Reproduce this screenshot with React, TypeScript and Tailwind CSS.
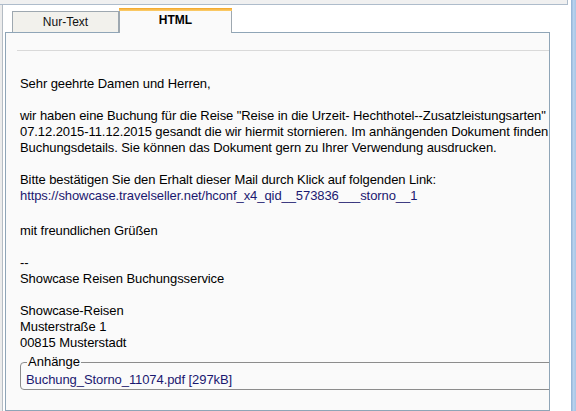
import React from "react";

const lines: { t: string; cls?: string }[] = [
  { t: "Sehr geehrte Damen und Herren," },
  { t: "\u00a0" },
  { t: 'wir haben eine Buchung für die Reise "Reise in die Urzeit- Hechthotel--Zusatzleistungsarten"' },
  { t: "07.12.2015-11.12.2015 gesandt die wir hiermit stornieren. Im anhängenden Dokument finden" },
  { t: "Buchungsdetails. Sie können das Dokument gern zu Ihrer Verwendung ausdrucken." },
  { t: "\u00a0" },
  { t: "Bitte bestätigen Sie den Erhalt dieser Mail durch Klick auf folgenden Link:" },
  { t: "https://showcase.travelseller.net/hconf_x4_qid__573836___storno__1", cls: "text-[#1a1870]" },
  { t: "\u00a0", cls: "h-[19px]" },
  { t: "mit freundlichen Grüßen" },
  { t: "\u00a0" },
  { t: "--" },
  { t: "Showcase Reisen Buchungsservice" },
  { t: "\u00a0" },
  { t: "Showcase-Reisen" },
  { t: "Musterstraße 1" },
  { t: "00815 Musterstadt" },
];

export default function App() {
  return (
    <div
      className="w-[576px] h-[411px] overflow-hidden flex bg-white"
      style={{ fontFamily: '"Liberation Sans", Arial, sans-serif' }}
    >
      <div className="flex-1 flex flex-col min-w-0">
        <div className="h-[5px] mr-[3px] bg-[#f0f0f0] border-b border-r border-[#aebccb] shrink-0" />
        <div className="flex-1 flex min-h-0">
          <div className="w-[3px] shrink-0 bg-[#ececec] border-r border-[#b4bcc4]" />
          <div className="flex-1 flex flex-col min-w-0 pl-[2px] pr-[21px]">
            <div className="h-[27px] flex items-end pl-[7px] shrink-0">
              <div className="w-[107px] h-[21px] bg-[#f2f1ec] border border-b-0 border-[#9ea8b0] flex items-center justify-center text-[12px] text-[#111]">
                Nur-Text
              </div>
              <div className="w-[113px] h-[25px] bg-[#fafafa] border-x border-[#9ea8b0] flex flex-col relative -mb-px z-10">
                <div className="h-[3px] bg-gradient-to-b from-[#f3a41f] to-[#fbcf6e] -mx-px shrink-0" />
                <div className="flex-1 flex justify-center pt-[2px] text-[12px] font-bold text-black leading-[14px]">
                  HTML
                </div>
              </div>
            </div>
            <div className="flex-1 bg-[#fafafa] border border-[#8fa5b7] overflow-hidden pt-[17px] text-[13px] leading-[16px] text-black">
              <div className="ml-[11px] h-px bg-[#d9d9d9]" />
              <div className="pl-[14px] pt-[25px]">
                {lines.map((l, i) => (
                  <div key={i} className={`whitespace-nowrap h-[16px] tracking-[-0.08px] ${l.cls ?? ""}`}>
                    {l.t}
                  </div>
                ))}
                <fieldset className="mt-[3px] w-[560px] border border-[#8c8c8c] rounded-[4px] px-[5px] pt-[2px] pb-[1px]">
                  <legend className="ml-[1px] px-[1px] leading-[16px]">Anhänge</legend>
                  <div className="text-[#1a1870] whitespace-nowrap tracking-[-0.08px]">Buchung_Storno_11074.pdf [297kB]</div>
                </fieldset>
              </div>
            </div>
          </div>
        </div>
      </div>
      <div className="w-[5px] shrink-0 bg-gradient-to-r from-[#8fb0d4] via-[#b7d2ee] to-[#a8c4e4]" />
    </div>
  );
}
